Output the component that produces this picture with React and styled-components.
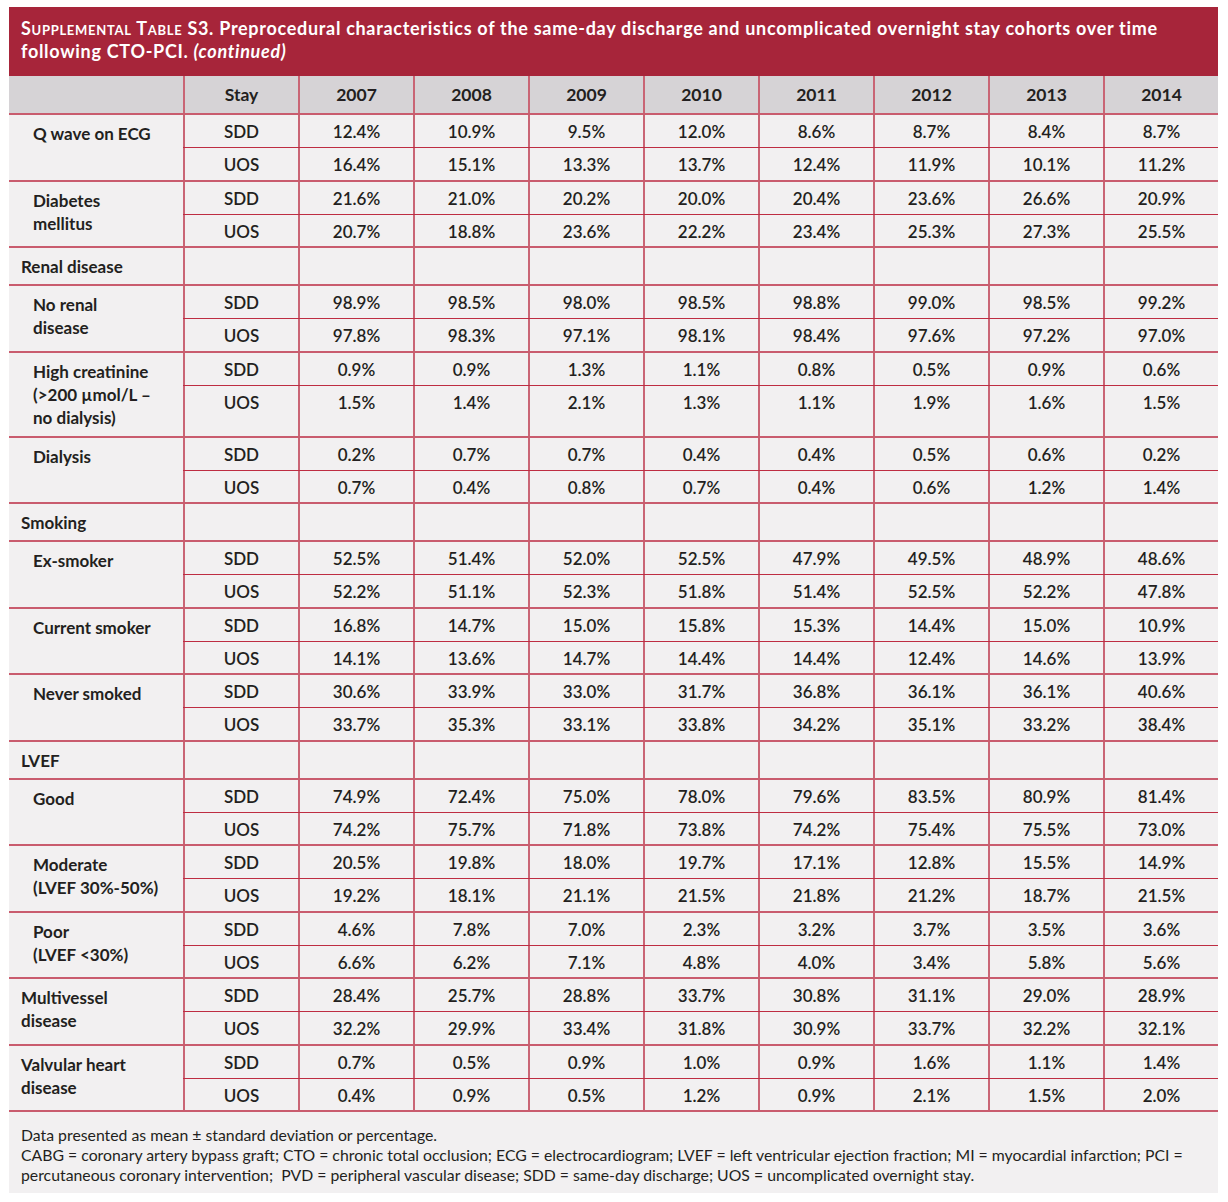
import React from 'react';
import styled, { createGlobalStyle } from 'styled-components';

const GlobalStyle = createGlobalStyle`
  body {
    margin: 0;
    background: #fff;
    font-family: Lato, "Open Sans", sans-serif;
    color: #231f20;
  }
`;

const Page = styled.div`
  padding: 7px 0 8px 9px;
`;

const Panel = styled.div`
  width: 1209px;
  background: #f2f0f1;
`;

const TitleBand = styled.div`
  background: #a7253a;
  color: #fff;
  padding: 10px 12px 13px 12px;
  font-size: 18px;
  font-weight: 700;
  line-height: 23px;
  letter-spacing: 0.7px;
`;

const SmallCaps = styled.span`
  font-variant: small-caps;
`;

const HeaderRow = styled.div`
  display: flex;
  height: 37px;
  background: #d6d3d6;
  font-size: 17.5px;
  font-weight: 700;
`;

const LabelCell = styled.div`
  width: 174px;
  flex: none;
  box-sizing: border-box;
  padding: ${(p) => (p.$top ? '7px 4px 7px 12px' : '7px 4px 7px 24px')};
  font-size: 17px;
  font-weight: 700;
  line-height: 23px;
`;

const Cell = styled.div`
  width: 115px;
  flex: none;
  box-sizing: border-box;
  border-left: 2px solid #c96575;
  text-align: center;
  padding-top: ${(p) => (p.$lh ? '0' : '3px')};
  line-height: ${(p) => p.$lh || '28px'};
`;

const Group = styled.div`
  display: flex;
  border-top: 2px solid #c95c6e;
  font-size: 17px;
  font-weight: 600;
`;

const SectionRow = styled(Group)`
  height: 36px;

  ${LabelCell} {
    padding-top: 1px;
    padding-bottom: 0;
    line-height: 36px;
  }
`;

const Rows = styled.div`
  display: flex;
  flex-direction: column;
  flex: 1;
`;

const SubRow = styled.div`
  display: flex;
  height: ${(p) => (p.$first ? '32px' : 'auto')};
  min-height: 31.5px;
  flex: ${(p) => (p.$first ? 'none' : '1')};
  border-bottom: ${(p) => (p.$first ? '1px solid #be2d42' : 'none')};
`;

const TableEnd = styled.div`
  border-top: 2px solid #c95c6e;
`;

const Footer = styled.div`
  padding: 13px 12px 8px 12px;
  font-size: 15.8px;
  line-height: 20px;
`;

const years = ['2007', '2008', '2009', '2010', '2011', '2012', '2013', '2014'];

const rows = [
  { label: ['Q wave on ECG'], sdd: [12.4, 10.9, 9.5, 12.0, 8.6, 8.7, 8.4, 8.7], uos: [16.4, 15.1, 13.3, 13.7, 12.4, 11.9, 10.1, 11.2] },
  { label: ['Diabetes', 'mellitus'], sdd: [21.6, 21.0, 20.2, 20.0, 20.4, 23.6, 26.6, 20.9], uos: [20.7, 18.8, 23.6, 22.2, 23.4, 25.3, 27.3, 25.5] },
  { section: 'Renal disease' },
  { label: ['No renal', 'disease'], sdd: [98.9, 98.5, 98.0, 98.5, 98.8, 99.0, 98.5, 99.2], uos: [97.8, 98.3, 97.1, 98.1, 98.4, 97.6, 97.2, 97.0] },
  { label: ['High creatinine', '(>200 µmol/L –', 'no dialysis)'], sdd: [0.9, 0.9, 1.3, 1.1, 0.8, 0.5, 0.9, 0.6], uos: [1.5, 1.4, 2.1, 1.3, 1.1, 1.9, 1.6, 1.5] },
  { label: ['Dialysis'], sdd: [0.2, 0.7, 0.7, 0.4, 0.4, 0.5, 0.6, 0.2], uos: [0.7, 0.4, 0.8, 0.7, 0.4, 0.6, 1.2, 1.4] },
  { section: 'Smoking' },
  { label: ['Ex-smoker'], sdd: [52.5, 51.4, 52.0, 52.5, 47.9, 49.5, 48.9, 48.6], uos: [52.2, 51.1, 52.3, 51.8, 51.4, 52.5, 52.2, 47.8] },
  { label: ['Current smoker'], sdd: [16.8, 14.7, 15.0, 15.8, 15.3, 14.4, 15.0, 10.9], uos: [14.1, 13.6, 14.7, 14.4, 14.4, 12.4, 14.6, 13.9] },
  { label: ['Never smoked'], sdd: [30.6, 33.9, 33.0, 31.7, 36.8, 36.1, 36.1, 40.6], uos: [33.7, 35.3, 33.1, 33.8, 34.2, 35.1, 33.2, 38.4] },
  { section: 'LVEF' },
  { label: ['Good'], sdd: [74.9, 72.4, 75.0, 78.0, 79.6, 83.5, 80.9, 81.4], uos: [74.2, 75.7, 71.8, 73.8, 74.2, 75.4, 75.5, 73.0] },
  { label: ['Moderate', '(LVEF 30%-50%)'], sdd: [20.5, 19.8, 18.0, 19.7, 17.1, 12.8, 15.5, 14.9], uos: [19.2, 18.1, 21.1, 21.5, 21.8, 21.2, 18.7, 21.5] },
  { label: ['Poor', '(LVEF <30%)'], sdd: [4.6, 7.8, 7.0, 2.3, 3.2, 3.7, 3.5, 3.6], uos: [6.6, 6.2, 7.1, 4.8, 4.0, 3.4, 5.8, 5.6] },
  { label: ['Multivessel', 'disease'], top: true, sdd: [28.4, 25.7, 28.8, 33.7, 30.8, 31.1, 29.0, 28.9], uos: [32.2, 29.9, 33.4, 31.8, 30.9, 33.7, 32.2, 32.1] },
  { label: ['Valvular heart', 'disease'], top: true, sdd: [0.7, 0.5, 0.9, 1.0, 0.9, 1.6, 1.1, 1.4], uos: [0.4, 0.9, 0.5, 1.2, 0.9, 2.1, 1.5, 2.0] },
];

const pct = (v) => `${v.toFixed(1)}%`;

const Lines = ({ lines }) =>
  lines.map((l, i) => (
    <React.Fragment key={i}>
      {i > 0 && <br />}
      {l}
    </React.Fragment>
  ));

const DataRow = ({ stay, values, first }) => (
  <SubRow $first={first}>
    <Cell>{stay}</Cell>
    {values.map((v, i) => (
      <Cell key={i}>{pct(v)}</Cell>
    ))}
  </SubRow>
);

export default function App() {
  return (
    <Page>
      <GlobalStyle />
      <Panel>
        <TitleBand>
          <SmallCaps>Supplemental Table S3.</SmallCaps> Preprocedural characteristics of the same-day
          discharge and uncomplicated overnight stay cohorts over time
          <br />
          following CTO-PCI. <i>(continued)</i>
        </TitleBand>

        <HeaderRow>
          <LabelCell />
          <Cell $lh="37px">Stay</Cell>
          {years.map((y) => (
            <Cell key={y} $lh="37px">{y}</Cell>
          ))}
        </HeaderRow>

        {rows.map((r, idx) =>
          r.section ? (
            <SectionRow key={idx}>
              <LabelCell $top>{r.section}</LabelCell>
              <Cell />
              {years.map((y) => (
                <Cell key={y} />
              ))}
            </SectionRow>
          ) : (
            <Group key={idx}>
              <LabelCell $top={r.top}>
                <Lines lines={r.label} />
              </LabelCell>
              <Rows>
                <DataRow stay="SDD" values={r.sdd} first />
                <DataRow stay="UOS" values={r.uos} />
              </Rows>
            </Group>
          )
        )}
        <TableEnd />

        <Footer>
          Data presented as mean ± standard deviation or percentage.
          <br />
          CABG = coronary artery bypass graft; CTO = chronic total occlusion; ECG = electrocardiogram; LVEF = left
          ventricular ejection fraction; MI = myocardial infarction; PCI =
          <br />
          percutaneous coronary intervention;{'\u00a0'} PVD = peripheral vascular disease; SDD = same-day discharge; UOS
          = uncomplicated overnight stay.
        </Footer>
      </Panel>
    </Page>
  );
}
